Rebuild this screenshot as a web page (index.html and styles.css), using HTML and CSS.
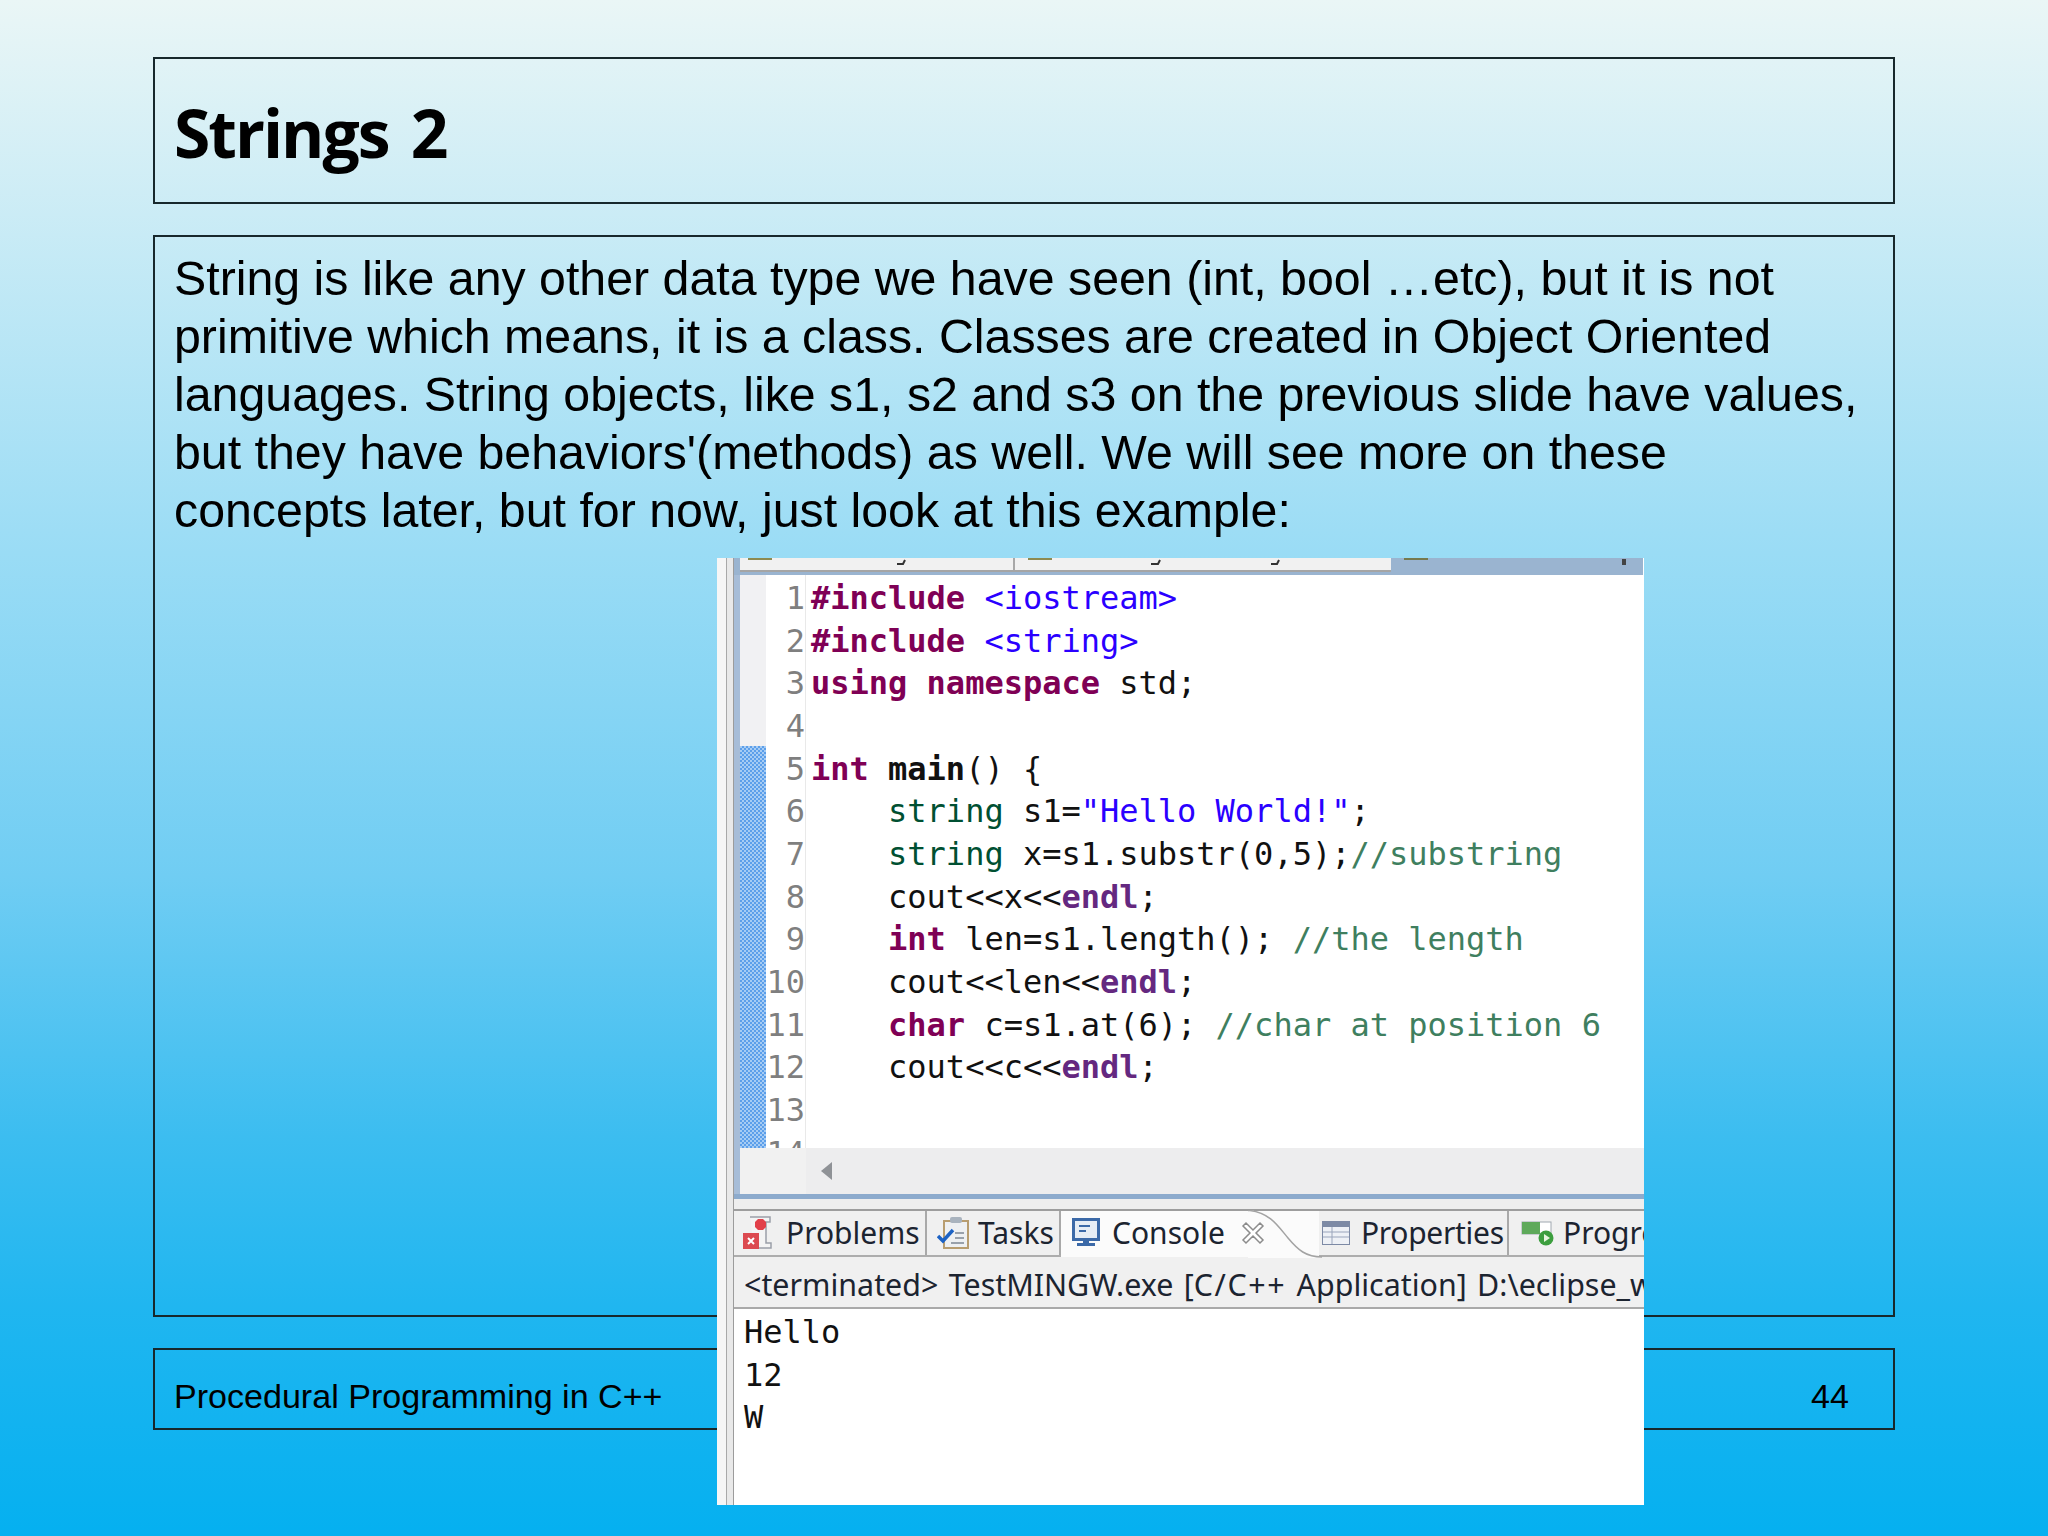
FILE: index.html
```html
<!DOCTYPE html>
<html>
<head>
<meta charset="utf-8">
<title>Strings 2</title>
<link rel="stylesheet" href="styles.css">
</head>
<body>

<div class="slide">
	<div class="box titleBox"><h1>Strings 2</h1></div>
	<div class="box bodyBox">
		<p>String is like any other data type we have seen (int, bool …etc), but it is not<br>
		primitive which means, it is a class. Classes are created in Object Oriented<br>
		languages. String objects, like s1, s2 and s3 on the previous slide have values,<br>
		but they have behaviors'(methods) as well. We will see more on these<br>
		concepts later, but for now, just look at this example:</p>
	</div>
	<div class="box footBox">
		<span>Procedural Programming in C++</span>
		<span class="pageNum">44</span>
	</div>
</div>

<!--Eclipse screenshot lying over the slide-->
<div class="shot">
	<div class="rail"></div>
	<div class="ide">
		<svg class="strip" width="909" height="17" viewBox="0 0 909 17">
			<rect x="0" y="0" width="909" height="17" fill="#9ab4d0"/>
			<rect x="6" y="0" width="651" height="12" fill="#f1f1f1"/>
			<rect x="6" y="12" width="651" height="2" fill="#a5a5a5"/>
			<rect x="279" y="0" width="2" height="12" fill="#a8a8a8"/>
			<rect x="14" y="0" width="24" height="2" fill="#8d8a50"/>
			<rect x="294" y="0" width="24" height="2" fill="#8d8a50"/>
			<rect x="670" y="0" width="24" height="2" fill="#76794e"/>
			<path d="M163 6h6l2-4M417 6h7l2-4M537 6h6l2-4" fill="none" stroke="#333" stroke-width="2"/>
			<rect x="888" y="1" width="4" height="6" fill="#444"/>
		</svg>

		<div class="editor">
			<div class="ruler"><div class="rulerMark"></div></div>
			<div class="lines">
				<div class="row"><span class="num">1</span><code><b class="kw">#include</b> <span class="str">&lt;iostream&gt;</span></code></div>
				<div class="row"><span class="num">2</span><code><b class="kw">#include</b> <span class="str">&lt;string&gt;</span></code></div>
				<div class="row"><span class="num">3</span><code><b class="kw">using</b> <b class="kw">namespace</b> std;</code></div>
				<div class="row"><span class="num">4</span><code></code></div>
				<div class="row"><span class="num">5</span><code><b class="kw">int</b> <b>main</b>() {</code></div>
				<div class="row"><span class="num">6</span><code>    <span class="type">string</span> s1=<span class="str">"Hello World!"</span>;</code></div>
				<div class="row"><span class="num">7</span><code>    <span class="type">string</span> x=s1.substr(0,5);<span class="cmt">//substring</span></code></div>
				<div class="row"><span class="num">8</span><code>    cout&lt;&lt;x&lt;&lt;<b class="macro">endl</b>;</code></div>
				<div class="row"><span class="num">9</span><code>    <b class="kw">int</b> len=s1.length(); <span class="cmt">//the length</span></code></div>
				<div class="row"><span class="num">10</span><code>    cout&lt;&lt;len&lt;&lt;<b class="macro">endl</b>;</code></div>
				<div class="row"><span class="num">11</span><code>    <b class="kw">char</b> c=s1.at(6); <span class="cmt">//char at position 6</span></code></div>
				<div class="row"><span class="num">12</span><code>    cout&lt;&lt;c&lt;&lt;<b class="macro">endl</b>;</code></div>
				<div class="row"><span class="num">13</span><code></code></div>
				<div class="row"><span class="num">14</span><code></code></div>
			</div>
		</div>

		<div class="hscroll">
			<svg width="12" height="18" viewBox="0 0 12 18"><path d="M11 0V18L0 9Z" fill="#8f9296"/></svg>
		</div>
		<div class="splitter"></div>

		<div class="tabs">
			<div class="tab tabProblems">
				<svg width="34" height="34" viewBox="0 0 34 34">
					<path d="M8 1H28V6H24V27H29V32H12" fill="#f4f4f4" stroke="#9a9fa8" stroke-width="1.5"/>
					<path d="M13 6l3-3h5l3 3v5l-3 3h-5l-3-3z" fill="#e2404a"/>
					<rect x="1" y="17" width="16" height="16" fill="#dc4a50"/>
					<path d="M6 22l6 6M12 22l-6 6" stroke="#fff" stroke-width="2"/>
				</svg>
				<span>Problems</span>
			</div>
			<div class="tab tabTasks">
				<svg width="32" height="34" viewBox="0 0 32 34">
					<rect x="7" y="5" width="24" height="27" fill="#eef0f2" stroke="#b89d70" stroke-width="2"/>
					<rect x="13" y="1" width="12" height="6" rx="2" fill="#a9b3be"/>
					<path d="M1 20l5 5 10-11" fill="none" stroke="#1c62c4" stroke-width="3.5"/>
					<path d="M18 17h9M18 22h9M14 27h13" stroke="#7d8794" stroke-width="1.5"/>
				</svg>
				<span>Tasks</span>
			</div>
			<div class="tab tabConsole">
				<svg width="30" height="30" viewBox="0 0 30 30">
					<rect x="1.5" y="1.5" width="25" height="20" fill="#e6edf5" stroke="#3c6aa8" stroke-width="3"/>
					<path d="M7 8h11M7 13h7" stroke="#3c6aa8" stroke-width="2"/>
					<path d="M11 22h6v3h6v3H5v-3h6z" fill="#3c6aa8"/>
				</svg>
				<span>Console</span>
				<svg class="tabCurve" width="74" height="48" viewBox="0 0 74 48">
					<path d="M0 0H2C22 3 30 16 40 28C50 40 58 47 74 47V48H0Z" fill="#fbfbfb"/>
					<path d="M0 .5H2C22 3 30 16 40 28C50 40 58 47 74 47" fill="none" stroke="#a3a3a3" stroke-width="1.5"/>
				</svg>
				<svg class="closeIcon" width="24" height="24" viewBox="0 0 24 24">
					<path d="M2 5L5 2L12 9L19 2L22 5L15 12L22 19L19 22L12 15L5 22L2 19L9 12Z" fill="#fff" stroke="#8c8c8c" stroke-width="1.5"/>
				</svg>
			</div>
			<div class="tab tabProperties">
				<svg width="28" height="24" viewBox="0 0 28 24">
					<rect x=".5" y=".5" width="27" height="23" fill="#eef1f6" stroke="#7d8aa5"/>
					<rect x="1" y="1" width="26" height="5" fill="#7d8aa5"/>
					<path d="M1 11h26M1 16h26M10 6v17" stroke="#9aa5bb"/>
				</svg>
				<span>Properties</span>
			</div>
			<div class="tab tabProgress">
				<svg width="34" height="26" viewBox="0 0 34 26">
					<rect x="1" y="2" width="29" height="12" fill="#fff" stroke="#a0a8b0"/>
					<rect x="1" y="2" width="18" height="12" fill="#5ea95a"/>
					<circle cx="25" cy="18" r="7.5" fill="#3c9e3e"/>
					<path d="M23 14l6 4-6 4z" fill="#e8f5e0"/>
				</svg>
				<span>Progress</span>
			</div>
		</div>

		<div class="consoleBar">&lt;terminated&gt; TestMINGW.exe [<span class="wideText">C/C++</span> Application] D:\eclipse_workspace\TestMINGW</div>
		<div class="output">Hello
12
W</div>
	</div>
</div>

</body>
</html>
```

FILE: styles.css
```css
html, body { margin: 0; padding: 0; }

body {
	width: 2048px;
	height: 1536px;
	overflow: hidden;
	position: relative;
	background: linear-gradient(180deg, #eaf6f6 0%, #9adcf5 36%, #70cdf3 57%, #3cbdf0 74%, #20b6f0 85%, #05b0f0 100%);
	font-family: "Liberation Sans", Arial, sans-serif;
	color: #000;
}

.slide {
	display: flex;
	flex-direction: column;
	gap: 31px;
	padding: 57px 153px 0 153px;
}

.box {
	border: 2px solid #17282c;
	padding: 0 20px 0 19px;
}

.titleBox {
	height: 143px;
	display: flex;
	align-items: center;
}

h1 {
	margin: 3px 0 0 0;
	font-family: "Open Sans", sans-serif;
	font-size: 66px;
	font-weight: bold;
	letter-spacing: -2px;
	word-spacing: 7px;
}

.bodyBox { height: 1078px; }

.bodyBox p {
	margin: 12px 0 0 0;
	font-size: 48.3px;
	line-height: 58px;
}

.footBox {
	height: 78px;
	display: flex;
	align-items: center;
	justify-content: space-between;
	font-size: 34.07px;
}

.footBox span { margin-top: 15px; }

.pageNum { margin-right: 24px; }

/* screenshot */
.shot {
	position: absolute;
	top: 558px;
	left: 717px;
	width: 927px;
	height: 947px;
	display: flex;
	background: #fff;
	overflow: hidden;
}

.rail {
	width: 17px;
	flex: none;
	background: linear-gradient(90deg, #f6f6f6 0, #f6f6f6 9px, #a9a9a9 9px, #a9a9a9 10px, #e9e9e9 10px, #e9e9e9 16px, #9c9c9c 16px);
}

.ide {
	flex: 1;
	min-width: 0;
	display: flex;
	flex-direction: column;
}

.strip { display: block; flex: none; }

.editor {
	height: 573px;
	flex: none;
	display: flex;
	overflow: hidden;
	border-left: 6px solid #a7bdd8;
}

.ruler {
	width: 26px;
	flex: none;
	background: #f1f1f3;
}

.rulerMark {
	height: 402px;
	margin-top: 171px;
	background: repeating-conic-gradient(#5c9fea 0 25%, #a6ccf4 0 50%) 0 0 / 4px 4px;
}

.lines {
	flex: 1;
	padding-top: 2px;
	background: linear-gradient(90deg, #fff 0, #fff 39px, #e9e9e9 39px, #e9e9e9 40px, #fff 40px);
}

.row {
	display: flex;
	height: 42.66px;
	line-height: 42.66px;
	font-family: "DejaVu Sans Mono", monospace;
	font-size: 32px;
	white-space: pre;
}

.num {
	width: 39px;
	text-align: right;
	color: #7f7f7f;
	flex: none;
}

code {
	font-family: inherit;
	margin-left: 6px;
	color: #111;
}

.kw { color: #7f0055; }
.macro { color: #642880; }
.str { color: #2a00ff; }
.type { color: #005032; }
.cmt { color: #3f7f5f; }

.hscroll {
	height: 46px;
	flex: none;
	display: flex;
	align-items: center;
	padding-left: 81px;
	background: linear-gradient(90deg, #f1f1f1 0, #f1f1f1 66px, #ededee 66px);
	border-left: 6px solid #a7bdd8;
	box-sizing: border-box;
}

.splitter {
	height: 15px;
	flex: none;
	box-sizing: border-box;
	border-top: 5px solid #8dabcd;
	background: #eeeeee;
}

.tabs {
	height: 48px;
	flex: none;
	display: flex;
	box-sizing: border-box;
	border-top: 2px solid #9d9d9d;
	border-bottom: 2px solid #adadad;
	background: #f0f0f0;
	font-family: "Noto Sans", sans-serif;
	font-size: 30px;
	line-height: 40px;
	color: #1c2430;
	white-space: nowrap;
}

.tab {
	display: flex;
	align-items: center;
	gap: 8px;
	flex: none;
	box-sizing: border-box;
	height: 44px;
}

.tabProblems { width: 193px; padding-left: 8px; gap: 10px; border-right: 2px solid #a9a9a9; }
.tabTasks { width: 134px; padding-left: 10px; gap: 9px; border-right: 2px solid #a9a9a9; }

.tabConsole {
	width: 258px;
	height: 46px;
	margin-bottom: -2px;
	padding: 0 0 2px 11px;
	gap: 10px;
	position: relative;
	background: #fbfbfb;
}

.closeIcon {
	position: relative;
	flex: none;
	margin-left: 6px;
}

.tabCurve {
	position: absolute;
	top: -1px;
	right: -3px;
}

.tabProperties {
	width: 190px;
	padding-left: 3px;
	gap: 11px;
	letter-spacing: -0.3px;
	border-right: 2px solid #a9a9a9;
}

.tabProgress { padding-left: 12px; }

.consoleBar {
	height: 52px;
	flex: none;
	box-sizing: border-box;
	padding-left: 10px;
	background: #f0f0f0;
	border-bottom: 2px solid #a9a9a9;
	font-family: "Noto Sans", sans-serif;
	font-size: 30.4px;
	line-height: 56px;
	word-spacing: 2.5px;
	color: #1c2430;
	white-space: nowrap;
	overflow: hidden;
}

.wideText { letter-spacing: 1.6px; }

.output {
	flex: 1;
	padding: 2px 0 0 10px;
	font-family: "DejaVu Sans Mono", monospace;
	font-size: 32px;
	line-height: 42.6px;
	white-space: pre;
	color: #111;
}
```
